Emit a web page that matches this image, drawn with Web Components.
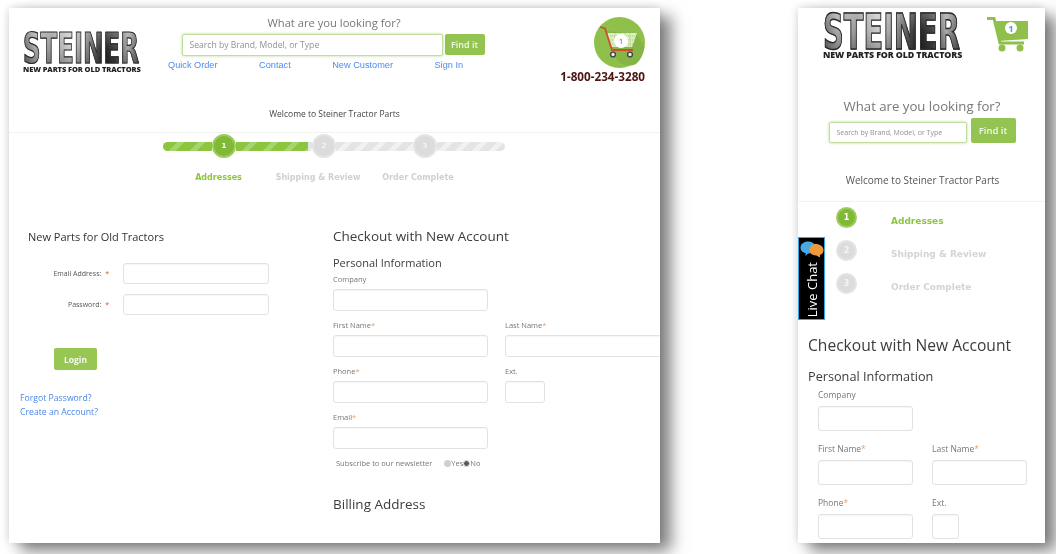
<!DOCTYPE html>
<html lang="en">
<head>
<meta charset="utf-8">
<title>Steiner Tractor Parts - Checkout</title>
<style>
  html, body { margin: 0; height: 100%; background: #fff; overflow: hidden; }
  body {
    display: flex;
    align-items: flex-start;
    gap: 138px;
    padding: 8px 0 0 9px;
    font-family: "Open Sans", "Liberation Sans", sans-serif;
    color: #333;
  }
</style>
</head>
<body>
<desktop-view></desktop-view>
<mobile-view></mobile-view>

<script>
const INPUT_CSS = `
  input.box {
    display: block;
    box-sizing: border-box;
    width: 100%;
    height: 100%;
    margin: 0;
    padding: 0 8px;
    border: 1px solid #e2e2e2;
    border-radius: 3px;
    background: #fff;
    outline: none;
    box-shadow: inset 0 1px 1px rgba(0, 0, 0, 0.04);
  }
`;

const CARD_SHADOW = '11px 8px 15px rgba(0, 0, 0, 0.5), -2px 0 9px rgba(0, 0, 0, 0.08), 0 -2px 9px rgba(0, 0, 0, 0.07)';

class SteinerLogo extends HTMLElement {
  connectedCallback() {
    this.attachShadow({ mode: 'open' });
    this.shadowRoot.innerHTML = `
      <style>
        :host {
          display: block;
          font-size: var(--logo-size, 39px);
          line-height: 1;
        }
        .mark {
          display: block;
          width: max-content;
          height: 0.78em;
          font-size: 1.1em;
          line-height: 0.78em;
          font-family: "DejaVu Sans", sans-serif;
          font-weight: 700;
          white-space: nowrap;
          transform: scaleX(0.57);
          transform-origin: 0 0;
          background:
            linear-gradient(180deg, rgba(255, 255, 255, 0.25), rgba(255, 255, 255, 0) 50%, rgba(0, 0, 0, 0.25)),
            linear-gradient(90deg, #666 0%, #aaa 10%, #999 25%, #ccc 40%, #888 55%, #222 70%, #444 80%, #aaa 90%, #555 100%);
          -webkit-background-clip: text;
          background-clip: text;
          color: transparent;
          -webkit-text-stroke: 0.028em #2a2a2a;
        }
        .tag {
          display: block;
          font-family: "Open Sans", sans-serif;
          font-weight: 800;
          font-size: 0.192em;
          line-height: 1.1;
          letter-spacing: -0.012em;
          white-space: nowrap;
          color: #222;
        }
      </style>
      <span class="mark">STEINER</span>
      <span class="tag">NEW PARTS FOR OLD TRACTORS</span>
    `;
  }
}

class SearchForm extends HTMLElement {
  connectedCallback() {
    this.attachShadow({ mode: 'open' });
    this.shadowRoot.innerHTML = `
      <style>
        :host { display: block; }
        h2 {
          margin: 0;
          text-align: center;
          font: 400 var(--title-size, 11.2px)/var(--title-line, 16px) "Open Sans", sans-serif;
          color: #777;
        }
        .row {
          display: flex;
          justify-content: center;
          align-items: flex-start;
          gap: var(--row-gap, 2px);
          margin-top: var(--row-top, 3px);
          padding-right: var(--row-pad, 2px);
        }
        input {
          box-sizing: border-box;
          width: var(--input-w, 261px);
          height: var(--input-h, 22px);
          margin: var(--input-top, 0) 0 0;
          padding: 0 7px;
          border: 1px solid #c0dea0;
          border-radius: 2px;
          box-shadow: 0 0 3px #b5d98a;
          outline: none;
          font: var(--input-font, 8.6px) "Open Sans", sans-serif;
        }
        input::placeholder { color: #929292; opacity: 1; }
        button {
          width: var(--btn-w, 40px);
          height: var(--btn-h, 21px);
          padding: 0;
          border: 0;
          border-radius: 2px;
          background: #93c452;
          color: #f2f8e8;
          font: 600 var(--btn-font, 9px) "Open Sans", sans-serif;
        }
      </style>
      <h2>What are you looking for?</h2>
      <div class="row">
        <input type="text" placeholder="Search by Brand, Model, or Type">
        <button type="button">Find it</button>
      </div>
    `;
  }
}

class StepBar extends HTMLElement {
  connectedCallback() {
    this.attachShadow({ mode: 'open' });
    this.shadowRoot.innerHTML = `
      <style>
        :host { display: block; width: 342px; }
        .track { display: flex; align-items: center; height: 24px; }
        .seg {
          height: 9px;
          background: repeating-linear-gradient(135deg, #e4e4e4 0 7px, #f1f1f1 7px 12px);
        }
        .seg.on { background: repeating-linear-gradient(135deg, #8cc63f 0 10px, #a8d46f 10px 15px); }
        .seg.first { border-radius: 5px 0 0 5px; }
        .seg.last { border-radius: 0 5px 5px 0; }
        .dot {
          box-sizing: border-box;
          flex: none;
          width: 24px;
          height: 24px;
          border: 2px solid #e4e4e4;
          border-radius: 50%;
          background: #dcdcdc;
          color: #f4f4f4;
          text-align: center;
          font: 700 7px/20px "DejaVu Sans", sans-serif;
        }
        .dot.on { background: #80b935; border-color: #9fcc60; color: #fff; }
        .labels {
          display: grid;
          grid-template-columns: 99px 100px 100px;
          margin: 14px 0 0 6px;
          justify-items: center;
          width: 299px;
          font: 700 8px/12px "DejaVu Sans", sans-serif;
          color: #d0d0d0;
          white-space: nowrap;
        }
        .labels .on { color: #8cc63f; }
      </style>
      <div class="track">
        <div class="seg on first" style="width:49px"></div>
        <div class="dot on">1</div>
        <div class="seg on" style="width:72px"></div>
        <div class="seg" style="width:4px"></div>
        <div class="dot">2</div>
        <div class="seg" style="width:77px"></div>
        <div class="dot">3</div>
        <div class="seg last" style="width:68px"></div>
      </div>
      <div class="labels">
        <span class="on">Addresses</span>
        <span>Shipping &amp; Review</span>
        <span>Order Complete</span>
      </div>
    `;
  }
}

class StepList extends HTMLElement {
  connectedCallback() {
    this.attachShadow({ mode: 'open' });
    this.shadowRoot.innerHTML = `
      <style>
        :host { display: block; }
        .item { display: flex; align-items: center; height: 33px; font: 700 9px "DejaVu Sans", sans-serif; color: #d4d4d4; }
        .dot {
          box-sizing: border-box;
          width: 21px;
          height: 21px;
          margin: 0 34px 6px 0;
          border: 2px solid #e4e4e4;
          border-radius: 50%;
          background: #dcdcdc;
          color: #f4f4f4;
          text-align: center;
          font: 700 8px/17px "DejaVu Sans", sans-serif;
        }
        .on { color: #8cc63f; }
        .on .dot { background: #80b935; border-color: #9fcc60; color: #fff; }
      </style>
      <div class="item on"><span class="dot">1</span>Addresses</div>
      <div class="item"><span class="dot">2</span>Shipping &amp; Review</div>
      <div class="item"><span class="dot">3</span>Order Complete</div>
    `;
  }
}

class TextField extends HTMLElement {
  connectedCallback() {
    const req = this.hasAttribute('required') ? '<i>*</i>' : '';
    this.attachShadow({ mode: 'open' });
    this.shadowRoot.innerHTML = `
      <style>
        :host { display: block; width: var(--field-w, 155px); }
        ${INPUT_CSS}
        label {
          display: block;
          height: var(--label-h, 14px);
          margin-bottom: var(--label-gap, 3px);
          font-size: var(--label-font, 7.5px);
          line-height: var(--label-h, 14px);
          color: #777;
          white-space: nowrap;
        }
        i { font-style: normal; color: #e8a06a; }
        input.box { height: var(--input-h, 22px); }
      </style>
      <label>${this.getAttribute('label')}${req}</label>
      <input class="box" type="text">
    `;
  }
}

class LoginPanel extends HTMLElement {
  connectedCallback() {
    this.attachShadow({ mode: 'open' });
    this.shadowRoot.innerHTML = `
      <style>
        :host { display: block; }
        ${INPUT_CSS}
        h3 { margin: 0 0 18px 19px; font: 400 11px/16px "Open Sans", sans-serif; color: #333; }
        .line { display: flex; align-items: center; height: 21px; margin-bottom: 10px; }
        .line label {
          width: 100px;
          text-align: right;
          font-size: 7px;
          color: #555;
          white-space: nowrap;
        }
        .line label i { font-style: normal; color: #e0502a; margin-left: 2px; }
        .line .cell { width: 146px; height: 21px; margin-left: 14px; }
        button {
          display: block;
          width: 43px;
          height: 22px;
          margin: 33px 0 0 45px;
          padding: 0;
          border: 0;
          border-radius: 2px;
          background: #97c653;
          color: #f6faef;
          font: 700 8.5px "Open Sans", sans-serif;
        }
        .links { margin: 21px 0 0 11px; }
        .links a { display: block; font-size: 8.7px; line-height: 14px; color: #4a86e8; text-decoration: none; }
      </style>
      <h3>New Parts for Old Tractors</h3>
      <div class="line"><label>Email Address: <i>*</i></label><div class="cell"><input class="box" type="text"></div></div>
      <div class="line"><label>Password: <i>*</i></label><div class="cell"><input class="box" type="password"></div></div>
      <button type="button">Login</button>
      <div class="links">
        <a href="#">Forgot Password?</a>
        <a href="#">Create an Account?</a>
      </div>
    `;
  }
}

class CheckoutHeads extends HTMLElement {
  connectedCallback() {
    this.attachShadow({ mode: 'open' });
    this.shadowRoot.innerHTML = `
      <style>
        :host { display: block; }
        h2 { margin: 0; font: 400 var(--h2-font, 13.5px)/var(--h2-line, 20px) "Open Sans", sans-serif; color: #3c3c3c; }
        h3 { margin: var(--h3-top, 9px) 0 0; font: 400 var(--h3-font, 11px)/16px "Open Sans", sans-serif; color: #3c3c3c; }
      </style>
      <h2>Checkout with New Account</h2>
      <h3>Personal Information</h3>
    `;
  }
}

class DesktopView extends HTMLElement {
  connectedCallback() {
    this.attachShadow({ mode: 'open' });
    this.shadowRoot.innerHTML = `
      <style>
        :host {
          display: block;
          flex: none;
          width: 651px;
          height: 535px;
          background: #fff;
          box-shadow: ${CARD_SHADOW};
          filter: blur(0.4px);
        }
        /* the Last Name box runs off the card's right edge in the screenshot */
        .cols { overflow-x: clip; }
        .top { display: flex; height: 90px; }
        steiner-logo { --logo-size: 39px; margin: 24px 0 0 14px; width: 145px; flex: none; }
        .mid { width: 332px; flex: none; padding-top: 7px; }
        .nav {
          display: flex;
          gap: 41.5px;
          margin-top: 3px;
          font: 400 9.2px/12px "Liberation Sans", sans-serif;
        }
        .nav a { color: #4a8cf0; text-decoration: none; white-space: nowrap; }
        .cart { flex: 1; display: flex; flex-direction: column; align-items: flex-end; padding: 9px 15px 0 0; }
        .phone { margin-top: 1px; font: 700 11.700px/14px "Open Sans", sans-serif; color: #4a1512; white-space: nowrap; }
        .welcome {
          height: 34px;
          border-bottom: 1px solid #f2f2f2;
          text-align: center;
          font-size: 8.5px;
          line-height: 32px;
          color: #444;
        }
        step-bar { margin: 1px 0 0 154px; }
        .cols { display: flex; margin-top: 42px; }
        login-panel { flex: none; width: 324px; padding-top: 3px; }
        .right { flex: 1; min-width: 0; }
        .pair { display: flex; gap: 17px; margin-top: 7px; }
        .pair text-field { flex: none; }
        .ext { --field-w: 40px; }
        .sub {
          display: flex;
          align-items: center;
          margin: 7px 0 0 3px;
          font-size: 7.5px;
          line-height: 14px;
          color: #777;
        }
        .sub input {
          appearance: none;
          -webkit-appearance: none;
          width: 7px;
          height: 7px;
          margin: 0;
          border-radius: 50%;
          background: #cfcfcf;
        }
        .sub input:checked { background: radial-gradient(circle, #555 0 2px, #cfcfcf 2.500px); }
        .billing { margin: 24px 0 0; font: 400 13.500px/20px "Open Sans", sans-serif; color: #3c3c3c; }
      </style>
      <div class="top">
        <steiner-logo></steiner-logo>
        <div class="mid">
          <search-form></search-form>
          <div class="nav">
            <a href="#">Quick Order</a><a href="#">Contact</a><a href="#">New Customer</a><a href="#">Sign In</a>
          </div>
        </div>
        <div class="cart">
          <svg width="51" height="51" viewBox="0 0 51 51" aria-hidden="true">
            <circle cx="25.5" cy="25.5" r="25.5" fill="#8fc04c"/>
            <path d="M12 14 L24 45 Q35 51 42 47 Q49 41 50.500 30 L43 17 Z" fill="#85b545"/>
            <path d="M12 16 H43 L38 30 H17 Z" fill="#dcedc4"/>
            <path d="M16 19 H42 M16 23 H41 M18 27 H39 M21 16 V30 M26 16 V30 M31 16 V30 M36 16 V30" stroke="#a9cf74" stroke-width="1" stroke-dasharray="1 1"/>
            <path d="M6 10 L11 11.500 L18 33 H39" fill="none" stroke="#c8502e" stroke-width="1.800"/>
            <circle cx="19" cy="37.500" r="2.400" fill="#eee" stroke="#444" stroke-width="1.400"/>
            <circle cx="36" cy="37.500" r="2.400" fill="#eee" stroke="#444" stroke-width="1.400"/>
            <circle cx="27" cy="24" r="7" fill="#fff"/>
            <text x="27" y="27" text-anchor="middle" font-family="Open Sans" font-size="8" fill="#666">1</text>
          </svg>
          <div class="phone">1-800-234-3280</div>
        </div>
      </div>
      <div class="welcome">Welcome to Steiner Tractor Parts</div>
      <step-bar></step-bar>
      <div class="cols">
        <login-panel></login-panel>
        <div class="right">
          <checkout-heads></checkout-heads>
          <text-field label="Company" style="margin-top:1px"></text-field>
          <div class="pair">
            <text-field label="First Name" required></text-field>
            <text-field label="Last Name" required style="--field-w:172px"></text-field>
          </div>
          <div class="pair">
            <text-field label="Phone" required></text-field>
            <text-field class="ext" label="Ext."></text-field>
          </div>
          <text-field label="Email" required style="margin-top:7px"></text-field>
          <div class="sub">
            <span style="margin-right:12px">Subscribe to our newsletter</span>
            <input type="radio" name="news"><span>Yes</span><input type="radio" name="news" checked><span>No</span>
          </div>
          <div class="billing">Billing Address</div>
        </div>
      </div>
    `;
  }
}

class LiveChat extends HTMLElement {
  connectedCallback() {
    this.attachShadow({ mode: 'open' });
    this.shadowRoot.innerHTML = `
      <style>
        :host {
          position: absolute;
          left: 0;
          top: 229px;
          box-sizing: border-box;
          width: 27px;
          height: 83px;
          display: flex;
          flex-direction: column;
          align-items: center;
          background: #000;
          border: 1px solid #36a8e6;
        }
        svg { flex: none; margin-top: 3px; }
        span {
          margin-top: auto;
          margin-bottom: 2px;
          writing-mode: vertical-rl;
          transform: rotate(180deg);
          font: 400 13px/16px "Open Sans", sans-serif;
          color: #fff;
          white-space: nowrap;
        }
      </style>
      <svg width="24" height="17" viewBox="0 0 24 17" aria-hidden="true">
        <path d="M8 0.500 C13 0.500 15 3 15 6.500 C15 10 12 12.500 8 12.500 L5.500 15 L5.500 12 C2 11.500 0.500 9 0.500 6.500 C0.500 3 4 0.500 8 0.500Z" fill="#46a9e6"/>
        <path d="M15.500 3 C20 3 23.500 5.500 23.500 9 C23.500 11.500 22 13.500 20 14 L20 16.500 L16.500 14.500 C12 14.500 9.500 12 9.500 9 C9.500 5.500 12 3 15.500 3Z" fill="#ee9a3a"/>
      </svg>
      <span>Live Chat</span>
    `;
  }
}

class MobileView extends HTMLElement {
  connectedCallback() {
    this.attachShadow({ mode: 'open' });
    this.shadowRoot.innerHTML = `
      <style>
        :host {
          display: block;
          position: relative;
          flex: none;
          width: 247px;
          height: 535px;
          background: #fff;
          box-shadow: ${CARD_SHADOW};
          filter: blur(0.4px);
        }
        .top { display: flex; justify-content: space-between; height: 72px; padding: 4px 17px 0 25px; }
        steiner-logo { --logo-size: 46px; width: 140px; flex: none; }
        .cart { margin-top: 5px; }
        search-form {
          --title-size: 13.200px;
          --title-line: 20px;
          --row-gap: 4px;
          --row-top: 2px;
          --row-pad: 0;
          --input-w: 138px;
          --input-h: 21px;
          --input-top: 4px;
          --input-font: 7px;
          --btn-w: 45px;
          --btn-h: 25px;
          --btn-font: 9.500px;
          margin: 12px 0 0;
          padding-left: 1px;
        }
        .welcome {
          box-sizing: border-box;
          height: 59px;
          padding: 25px 0 0 2px;
          border-bottom: 1px solid #f2f2f2;
          text-align: center;
          font-size: 10px;
          line-height: 24px;
          color: #555;
        }
        step-list { margin: 2px 0 0 38px; }
        checkout-heads {
          --h2-font: 15.600px;
          --h2-line: 22px;
          --h3-font: 12.700px;
          --h3-top: 12px;
          margin: 31px 0 0 10px;
        }
        .fields { padding: 0 0 0 20px; --field-w: 95px; --label-h: 22px; --label-gap: 0; --label-font: 8.500px; --input-h: 25px; }
        .pair { display: flex; gap: 19px; margin-top: 7px; }
        .ext { --field-w: 27px; }
      </style>
      <div class="top">
        <steiner-logo></steiner-logo>
        <svg class="cart" width="41" height="35" viewBox="0 0 41 35" aria-hidden="true">
          <path d="M0 1.500 H7 L13 26 H37" fill="none" stroke="#8fc04c" stroke-width="3"/>
          <path d="M9 4 H41 V22 L12 24 Z" fill="#8fc04c"/>
          <circle cx="15" cy="31" r="3.500" fill="#8fc04c"/>
          <circle cx="33" cy="31" r="3.500" fill="#8fc04c"/>
          <circle cx="24" cy="11" r="6" fill="#fff"/>
          <text x="24" y="14.500" text-anchor="middle" font-family="Open Sans" font-weight="700" font-size="9.500" fill="#4a9cf0">1</text>
        </svg>
      </div>
      <search-form></search-form>
      <div class="welcome">Welcome to Steiner Tractor Parts</div>
      <step-list></step-list>
      <checkout-heads></checkout-heads>
      <div class="fields">
        <text-field label="Company"></text-field>
        <div class="pair">
          <text-field label="First Name" required></text-field>
          <text-field label="Last Name" required></text-field>
        </div>
        <div class="pair">
          <text-field label="Phone" required></text-field>
          <text-field class="ext" label="Ext."></text-field>
        </div>
      </div>
      <live-chat></live-chat>
    `;
  }
}

customElements.define('steiner-logo', SteinerLogo);
customElements.define('search-form', SearchForm);
customElements.define('step-bar', StepBar);
customElements.define('step-list', StepList);
customElements.define('text-field', TextField);
customElements.define('login-panel', LoginPanel);
customElements.define('checkout-heads', CheckoutHeads);
customElements.define('live-chat', LiveChat);
customElements.define('desktop-view', DesktopView);
customElements.define('mobile-view', MobileView);
</script>
</body>
</html>
